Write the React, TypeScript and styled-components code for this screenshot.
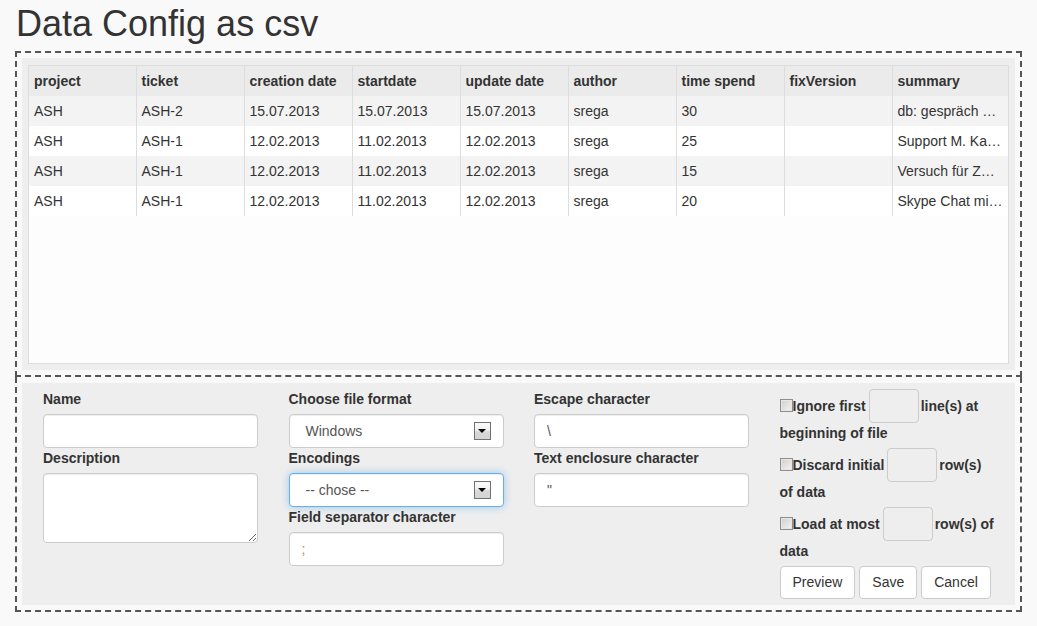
import styled, { createGlobalStyle } from 'styled-components';

const GlobalStyle = createGlobalStyle`
  * {
    box-sizing: border-box;
  }

  body {
    margin: 0;
    background: #f9f9f9;
    color: #333;
    font-family: "Liberation Sans", Arial, sans-serif;
    font-size: 14px;
  }
`;

const columns = ['project', 'ticket', 'creation date', 'startdate', 'update date', 'author', 'time spend', 'fixVersion', 'summary'];

const rows = [
  ['ASH', 'ASH-2', '15.07.2013', '15.07.2013', '15.07.2013', 'srega', '30', '', 'db: gespräch mit Kunde'],
  ['ASH', 'ASH-1', '12.02.2013', '11.02.2013', '12.02.2013', 'srega', '25', '', 'Support M. Kanzler'],
  ['ASH', 'ASH-1', '12.02.2013', '11.02.2013', '12.02.2013', 'srega', '15', '', 'Versuch für Zwischenablage'],
  ['ASH', 'ASH-1', '12.02.2013', '11.02.2013', '12.02.2013', 'srega', '20', '', 'Skype Chat mit Kunde'],
];

interface SelectProps {
  value: string;
  focused?: boolean;
}

function Select({ value, focused }: SelectProps) {
  return (
    <SelectBox $focused={focused} role="combobox">
      <span>{value}</span>
      <ArrowBox>
        <ArrowTriangle />
      </ArrowBox>
    </SelectBox>
  );
}

interface OptionProps {
  before: string;
  after: string;
}

function RowOption({ before, after }: OptionProps) {
  return (
    <OptionLine>
      <CheckBox type="checkbox" />
      {before}
      <CountInput type="text" />
      {after}
    </OptionLine>
  );
}

export default function App() {
  return (
    <Page>
      <GlobalStyle />
      <Title>Data Config as csv</Title>

      <PreviewBox>
        <GreyPanel>
          <TableBox>
            <DataTable>
              <colgroup>
                {columns.map((c, i) => (
                  <col key={c} style={i < columns.length - 1 ? { width: i === 0 ? 107 : 108 } : undefined} />
                ))}
              </colgroup>
              <thead>
                <tr>
                  {columns.map((c) => (
                    <HeadCell key={c}>{c}</HeadCell>
                  ))}
                </tr>
              </thead>
              <tbody>
                {rows.map((r, i) => (
                  <BodyRow key={i} $striped={i % 2 === 0}>
                    {r.map((v, j) => (
                      <BodyCell key={j}>{v}</BodyCell>
                    ))}
                  </BodyRow>
                ))}
              </tbody>
            </DataTable>
          </TableBox>
        </GreyPanel>
      </PreviewBox>

      <FormBox>
        <FormPanel>
          <FormColumn>
            <FieldLabel>Name</FieldLabel>
            <TextInput type="text" />
            <FieldLabel>Description</FieldLabel>
            <TextArea />
          </FormColumn>

          <FormColumn>
            <FieldLabel>Choose file format</FieldLabel>
            <Select value="Windows" />
            <FieldLabel>Encodings</FieldLabel>
            <Select value="-- chose --" focused />
            <FieldLabel>Field separator character</FieldLabel>
            <TextInput type="text" placeholder=";" />
          </FormColumn>

          <FormColumn>
            <FieldLabel>Escape character</FieldLabel>
            <TextInput type="text" defaultValue="\" />
            <FieldLabel>Text enclosure character</FieldLabel>
            <TextInput type="text" defaultValue={'"'} />
          </FormColumn>

          <FormColumn>
            <RowOption before="Ignore first" after="line(s) at beginning of file" />
            <RowOption before="Discard initial" after="row(s) of data" />
            <RowOption before="Load at most" after="row(s) of data" />
            <ButtonRow>
              <Button>Preview</Button>
              <Button>Save</Button>
              <Button>Cancel</Button>
            </ButtonRow>
          </FormColumn>
        </FormPanel>
      </FormBox>
    </Page>
  );
}

const Page = styled.div`
  width: 1037px;
  padding: 0 0 0 15px;
`;

const Title = styled.h1`
  margin: 0 0 7px;
  padding: 4px 0 0 1px;

  font-size: 36px;
  font-weight: 400;
  line-height: 40px;
  color: #333;
`;

const PreviewBox = styled.div`
  width: 1007px;
  padding: 5px;

  border: 2px dashed #555;
`;

const GreyPanel = styled.div`
  padding: 7px 6px 6px;
  background: #eee;
`;

const TableBox = styled.div`
  height: 299px;
  overflow: hidden;

  background: #fdfdfd;
  border: 1px solid #ddd;
`;

const DataTable = styled.table`
  width: 100%;
  table-layout: fixed;
  border-collapse: collapse;
`;

const HeadCell = styled.th`
  height: 30px;
  padding: 0 5px;

  background: #ebebeb;
  border-right: 1px solid #ddd;

  text-align: left;
  font-weight: 700;
  white-space: nowrap;
  overflow: hidden;
  text-overflow: ellipsis;

  &:last-child {
    border-right: none;
  }
`;

const BodyRow = styled.tr<{ $striped: boolean }>`
  background: ${({ $striped }) => ($striped ? '#f3f3f3' : '#fff')};
`;

const BodyCell = styled.td`
  height: 30px;
  padding: 0 5px;

  border-right: 1px solid #ddd;

  white-space: nowrap;
  overflow: hidden;
  text-overflow: ellipsis;

  &:last-child {
    border-right: none;
  }
`;

const FormBox = styled.div`
  width: 1007px;
  padding: 6px 5px 5px;

  border: 2px dashed #555;
  border-top: none;
`;

const FormPanel = styled.div`
  display: grid;
  grid-template-columns: repeat(4, 215px);
  column-gap: 30.5px;
  align-items: start;

  padding: 6px 21px 6px;
  background: #eee;
`;

const FormColumn = styled.div`
  display: flex;
  flex-direction: column;
`;

const FieldLabel = styled.label`
  display: block;
  margin-bottom: 5px;

  font-weight: 700;
  line-height: 20px;
`;

const fieldBase = `
  width: 100%;
  padding: 6px 12px;

  background: #fff;
  border: 1px solid #ccc;
  border-radius: 4px;
  box-shadow: inset 0 1px 1px rgba(0, 0, 0, 0.075);

  font-family: "Liberation Sans", Arial, sans-serif;
  font-size: 14px;
  line-height: 20px;
  color: #555;
  outline: none;
`;

const TextInput = styled.input`
  ${fieldBase}
  display: block;
  height: 34px;

  &::placeholder {
    color: #a09080;
  }
`;

const TextArea = styled.textarea`
  ${fieldBase}
  display: block;
  height: 70px;
  resize: vertical;
`;

const SelectBox = styled.div<{ $focused?: boolean }>`
  ${fieldBase}
  display: flex;
  justify-content: space-between;
  align-items: center;
  height: 34px;
  padding: 0 12px 0 16px;

  border-color: ${({ $focused }) => ($focused ? '#66afe9' : '#ccc')};
  box-shadow: ${({ $focused }) =>
    $focused
      ? 'inset 0 1px 1px rgba(0,0,0,.075), 0 0 8px rgba(102, 175, 233, 0.6)'
      : 'inset 0 1px 1px rgba(0, 0, 0, 0.075)'};
`;

const ArrowBox = styled.span`
  display: flex;
  justify-content: center;
  align-items: center;

  width: 17px;
  height: 18px;

  background: linear-gradient(#fbfbfb 0%, #f0f0f0 45%, #d8d8d8 55%, #d4d4d4 100%);
  border: 1px solid #707070;
`;

const ArrowTriangle = styled.span`
  width: 0;
  height: 0;

  border-left: 4px solid transparent;
  border-right: 4px solid transparent;
  border-top: 4px solid #000;
`;

const OptionLine = styled.label`
  display: block;
  margin-bottom: 5px;

  font-weight: 700;
  line-height: 20px;
`;

const CheckBox = styled.input`
  appearance: none;
  width: 13px;
  height: 13px;
  margin: 0;
  vertical-align: -1px;

  background: linear-gradient(135deg, #cfcfcf, #f4f4f4);
  border: 1px solid #8e8e8e;
  box-shadow: inset 0 0 0 1px #e6e6e6;
`;

const CountInput = styled.input`
  display: inline-block;
  width: 50px;
  height: 34px;
  margin: 0 2px 0 3px;
  padding: 6px;
  vertical-align: 0;

  background: #eee;
  border: 1px solid #ccc;
  border-radius: 4px;
  outline: none;

  font-family: "Liberation Sans", Arial, sans-serif;
  font-size: 14px;
  line-height: 20px;
`;

const ButtonRow = styled.div`
  display: flex;
  gap: 4px;
  margin-top: 0;
`;

const Button = styled.button`
  height: 33px;
  padding: 6px 12px;

  background: #fff;
  border: 1px solid #ccc;
  border-radius: 4px;

  font-family: "Liberation Sans", Arial, sans-serif;
  font-size: 14px;
  line-height: 19px;
  color: #333;
`;
